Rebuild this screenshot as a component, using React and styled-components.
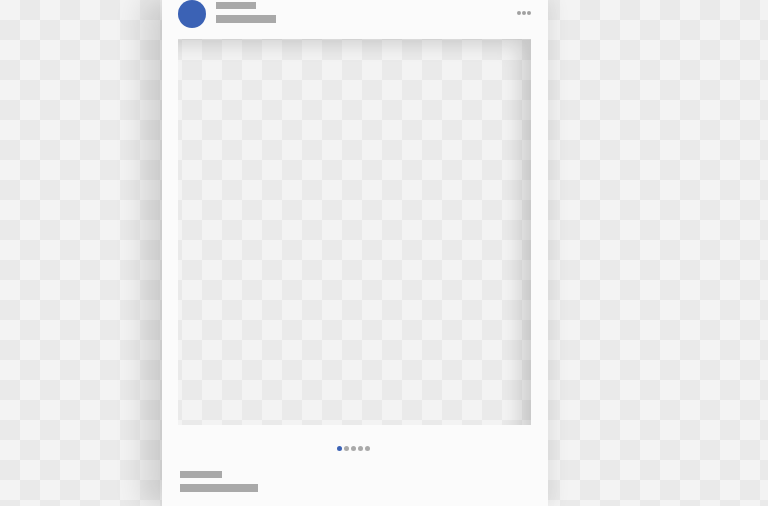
import React from "react";
import styled, { createGlobalStyle } from "styled-components";

const GlobalStyle = createGlobalStyle`
  html, body {
    margin: 0;
    padding: 0;
    width: 768px;
    height: 506px;
    overflow: hidden;
    font-family: "Liberation Sans", Arial, sans-serif;
  }
`;

const checker = `
  background-color: #f3f3f3;
  background-image: repeating-conic-gradient(#eaeaea 0 25%, #f3f3f3 0 50%);
  background-size: 40px 40px;
`;

const Page = styled.div`
  ${checker}
  width: 768px;
  height: 506px;
  padding-left: 162px;
  box-sizing: border-box;
  display: flex;
`;

const Card = styled.div`
  width: 386px;
  height: 506px;
  background: #fbfbfb;
  box-shadow: -18px 0 28px rgba(0, 0, 0, 0.14), 8px 0 16px rgba(0, 0, 0, 0.05);
  padding: 0 17px 0 16px;
  box-sizing: border-box;
  display: flex;
  flex-direction: column;
`;

const Header = styled.div`
  height: 39px;
  display: flex;
  align-items: flex-start;
`;

const Avatar = styled.div`
  width: 28px;
  height: 28px;
  border-radius: 50%;
  background: #3b62b5;
`;

const Names = styled.div`
  display: flex;
  flex-direction: column;
  margin-left: 10px;
  padding-top: 2px;
`;

const Bar = styled.div`
  width: ${(p) => p.w}px;
  height: ${(p) => p.h}px;
  background: #a9a9a9;
  margin-top: ${(p) => p.mt || 0}px;
`;

const More = styled.div`
  margin-left: auto;
  margin-top: 11px;
  display: flex;
  gap: 1px;
`;

const MoreDot = styled.span`
  width: 4px;
  height: 4px;
  border-radius: 50%;
  background: #a0a0a0;
`;

const Photo = styled.div`
  ${checker}
  background-position: 4px 1px;
  width: 353px;
  height: 386px;
  box-shadow: inset -18px 12px 20px -8px rgba(0, 0, 0, 0.16);
`;

const Pager = styled.div`
  height: 46px;
  display: flex;
  align-items: center;
  justify-content: center;
  gap: 2px;
  padding-right: 3px;
`;

const PageDot = styled.span`
  width: 5px;
  height: 5px;
  border-radius: 50%;
  background: ${(p) => (p.active ? "#3b62b5" : "#a9a9a9")};
`;

const Caption = styled.div`
  display: flex;
  flex-direction: column;
  padding-left: 2px;
`;

export default function App() {
  return (
    <>
      <GlobalStyle />
      <Page>
        <Card>
          <Header>
            <Avatar />
            <Names>
              <Bar w={40} h={7} />
              <Bar w={60} h={8} mt={6} />
            </Names>
            <More>
              <MoreDot />
              <MoreDot />
              <MoreDot />
            </More>
          </Header>
          <Photo />
          <Pager>
            <PageDot active />
            <PageDot />
            <PageDot />
            <PageDot />
            <PageDot />
          </Pager>
          <Caption>
            <Bar w={42} h={7} />
            <Bar w={78} h={8} mt={6} />
          </Caption>
        </Card>
      </Page>
    </>
  );
}
